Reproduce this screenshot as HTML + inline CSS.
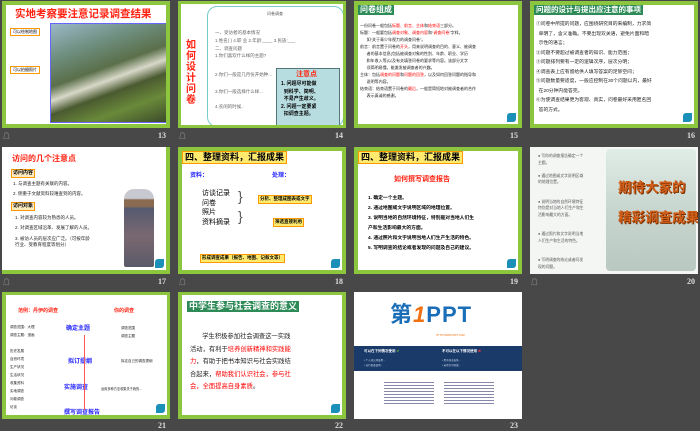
<!DOCTYPE html>
<html><head><meta charset="utf-8"><style>
*{margin:0;padding:0;box-sizing:border-box}
body{width:700px;height:431px;background:#484848;position:relative;overflow:hidden;font-family:"Liberation Sans","Noto Sans CJK SC",sans-serif}
.s{position:absolute;width:168px;height:127px;background:#fff;overflow:hidden}
.g{border:4px solid #8cc63f}
.n{position:absolute;color:#ddd;font-size:8px;font-weight:bold;font-family:"Liberation Serif",serif}
.ic{position:absolute;color:#bbb;font-size:7px}
.a{position:absolute;white-space:nowrap;line-height:1}
.t{font-size:4.5px;color:#222}
.logo{position:absolute;right:2px;bottom:2px;width:9px;height:9px;background:#1a8fb8;border-radius:3px 0 3px 0}
</style></head><body>

<!-- 13 -->
<div class="s g" style="left:2px;top:1px">
 <div class="a" style="left:9px;top:4px;color:#f21;font-size:10.5px;font-weight:bold">实地考察要注意记录调查结果</div>
 <div class="a" style="left:4px;top:23px;border:1px solid #f90;font-size:4px;padding:1px 2px">可以绘制地图</div>
 <div class="a" style="left:4px;top:61px;border:1px solid #f90;font-size:4px;padding:1px 2px">可以拍摄照片</div>
 <div style="position:absolute;left:44px;top:18px;width:118px;height:100px;border:1px solid #66f;background:linear-gradient(160deg,#9bb8c8 0%,#6f8f80 25%,#5a6f4a 45%,#d8d8c8 55%,#4a5a30 65%,#6a8a3a 80%,#3c4a2a 100%)"></div>
</div>
<div class="ic" style="left:3px;top:131px">☖</div><div class="n" style="left:158px;top:131px">13</div>

<!-- 14 -->
<div class="s g" style="left:178px;top:1px;border-width:3px">
 <div style="position:absolute;left:26px;top:2px;width:137px;height:121px;border:1px solid #7cc;border-radius:10px"></div>
 <div class="a" style="left:86px;top:8px;font-size:4px;color:#555">问卷调查</div>
 <div class="a t" style="left:34px;top:27px;color:#666">一、受访者的基本情况</div>
 <div class="a t" style="left:34px;top:35px;color:#666">1.姓名(  )  4.职 业  2.年龄:____  3.民族:___</div>
 <div class="a t" style="left:34px;top:43px;color:#666">二、调查问题</div>
 <div class="a t" style="left:34px;top:50px;color:#666">1.你们喜欢什么样的主题?</div>
 <div class="a t" style="left:34px;top:69px;color:#666">2.你们一般是几月份开始种...</div>
 <div class="a t" style="left:34px;top:86px;color:#666">3.你们一般选择什么样...</div>
 <div class="a t" style="left:34px;top:101px;color:#666">4.农闲的时候..</div>
 <div class="a" style="left:5px;top:36px;color:#f21;font-size:10px;font-weight:bold;white-space:normal;width:11px;line-height:11px">如何设计问卷</div>
 <div style="position:absolute;left:95px;top:64px;width:64px;height:60px;background:#b8dde0;border:1px solid #577"></div>
 <div class="a" style="left:115px;top:67px;color:#f21;font-size:7px;font-weight:bold">注意点</div>
 <div class="a" style="left:100px;top:77px;font-size:5px;font-weight:bold;line-height:7.5px">1. 问题尽可能做<br>&nbsp;&nbsp;到科学、简明、<br>&nbsp;&nbsp;不易产生歧义。<br>2. 问题一定要紧<br>&nbsp;&nbsp;扣调查主题。</div>
</div>
<div class="ic" style="left:179px;top:131px">☖</div><div class="n" style="left:335px;top:131px">14</div>

<!-- 15 -->
<div class="s g" style="left:354px;top:1px">
 <div class="a" style="left:0;top:0;background:#2e8b57;color:#fff;font-size:8px;font-weight:bold;padding:1px 2px">问卷组成</div>
 <div class="a t" style="left:2px;top:17px;line-height:7px;font-size:4px">一份问卷一般包括<span style="color:red">标题、前言、主体</span>和<span style="color:red">结束语</span>三部分。<br>标题：一般要包括<span style="color:red">调查对象、调查内容</span>和“<span style="color:red">调查问卷</span>”字样。<br>&nbsp;&nbsp;&nbsp;&nbsp;&nbsp;&nbsp;如“关于青少年视力的调查问卷”。<br>前言：前言置于问卷的<span style="color:red">开头</span>，用来说明调查的目的、意义、被调查<br>&nbsp;&nbsp;&nbsp;&nbsp;&nbsp;&nbsp;者的基本信息(包括被调查对象的性别、年龄、职业、学历<br>&nbsp;&nbsp;&nbsp;&nbsp;&nbsp;&nbsp;和年收入等)以及有关填答问卷的要求等内容。该部分文字<br>&nbsp;&nbsp;&nbsp;&nbsp;&nbsp;&nbsp;须简明易懂，能激发被调查者的兴趣。<br>主体：包括<span style="color:red">调查的问题</span>和<span style="color:red">问题的回答</span>，以及如何回答问题的指导和<br>&nbsp;&nbsp;&nbsp;&nbsp;&nbsp;&nbsp;说明等内容。<br>结束语：结束语置于问卷的<span style="color:red">最后</span>，一般是简短地对被调查者的合作<br>&nbsp;&nbsp;&nbsp;&nbsp;&nbsp;&nbsp;表示真诚的感谢。</div>
 <div class="logo"></div>
</div>
<div class="n" style="left:510px;top:131px">15</div>

<!-- 16 -->
<div class="s g" style="left:530px;top:1px">
 <div class="a" style="left:0;top:0;background:#2e8b57;color:#fff;font-size:7.5px;font-weight:bold;padding:1px 2px">问题的设计与提出应注意的事项</div>
 <div class="a" style="left:2px;top:15px;font-size:4.8px;line-height:9.5px;color:#222">①问卷中所提的问题，应围绕研究目的来编制，力求简<br>&nbsp;&nbsp;单明了，含义准确。不要出现双关语，避免片面和暗<br>&nbsp;&nbsp;示性的语言；<br>②问题不要超过被调查者的知识、能力范围；<br>③问题排列要有一定的逻辑次序，层次分明；<br>④调查表上应有留给供人填写答案的足够空间；<br>⑤问题数量要适度，一般应控制在30个问题以内，最好<br>&nbsp;&nbsp;在20分钟内能答完。<br>⑥为使调查结果更为客观、真实，问卷最好采用匿名回<br>&nbsp;&nbsp;答的方式。</div>
 <div class="logo"></div>
</div>
<div class="n" style="left:687px;top:131px">16</div>

<!-- 17 -->
<div class="s g" style="left:2px;top:147px;border-top:none;border-left:none">
 <div class="a" style="left:10px;top:8px;color:#f21;font-size:8px;font-weight:bold">访问的几个注意点</div>
 <div class="a" style="left:9px;top:22px;background:#fdebc0;border:1px solid #f90;font-size:5px;font-weight:bold;padding:1px">访问内容</div>
 <div class="a t" style="left:11px;top:35px">1. 与调查主题有关联的内容。</div>
 <div class="a t" style="left:11px;top:45px">2. 侧重于文献资料较难查到的内容。</div>
 <div class="a" style="left:9px;top:55px;background:#fdebc0;border:1px solid #f90;font-size:5px;font-weight:bold;padding:1px">访问对象</div>
 <div class="a t" style="left:13px;top:69px">1. 对调查内容较为熟悉的人员。</div>
 <div class="a t" style="left:13px;top:79px">2. 对调查区域沿革、发展了解的人员。</div>
 <div class="a t" style="left:13px;top:89px;line-height:6px">3. 被访人员的层次应广泛。（可按年龄<br>行业、受教育程度等划分）</div>
 <div style="position:absolute;left:122px;top:42px;width:30px;height:78px;background:linear-gradient(#c8c8d0 0%,#c8c8d0 12%,#8a6a50 14%,#8a6a50 22%,#555a70 25%,#7a6870 60%,#5a5a6a 100%);border-radius:10px 10px 2px 2px"></div>
 <div class="logo"></div>
</div>
<div class="ic" style="left:3px;top:277px">☖</div><div class="n" style="left:158px;top:277px">17</div>

<!-- 18 -->
<div class="s g" style="left:178px;top:147px">
 <div class="a" style="left:0;top:0;background:#ffea70;border:1px solid #f90;font-size:9px;font-weight:bold;padding:1px 2px">四、整理资料，汇报成果</div>
 <div class="a" style="left:8px;top:22px;color:#22f;font-size:6px;font-weight:bold">资料：</div>
 <div class="a" style="left:90px;top:22px;color:#22f;font-size:6px;font-weight:bold">处理：</div>
 <div class="a" style="left:20px;top:38px;font-size:7px;line-height:9.5px">访谈记录<br>问卷<br>照片<br>资料摘录</div>
 <div class="a" style="left:56px;top:38px;font-size:14px;color:#555">}</div>
 <div class="a" style="left:56px;top:58px;font-size:14px;color:#555">}</div>
 <div class="a" style="left:76px;top:44px;background:#ffea70;border:1px solid #f90;font-size:4.5px;font-weight:bold;padding:1px">分析、整理成图表或文字</div>
 <div class="a" style="left:91px;top:67px;background:#ffea70;border:1px solid #f90;font-size:4.5px;font-weight:bold;padding:1px">筛选直接利用</div>
 <div class="a" style="left:18px;top:103px;background:#ffea70;border:1px solid #f90;font-size:4.5px;font-weight:bold;padding:1px">形成调查成果（报告、地图、记叙文等）</div>
 <div class="logo"></div>
</div>
<div class="ic" style="left:179px;top:277px">☖</div><div class="n" style="left:335px;top:277px">18</div>

<!-- 19 -->
<div class="s g" style="left:354px;top:147px">
 <div class="a" style="left:0;top:0;background:#ffea70;border:1px solid #f90;font-size:9px;font-weight:bold;padding:1px 2px">四、整理资料，汇报成果</div>
 <div class="a" style="left:36px;top:25px;color:#f21;font-size:7px;font-weight:bold">如何撰写调查报告</div>
 <div class="a" style="left:10px;top:43px;font-size:4.8px;font-weight:bold;line-height:10px">1. 确定一个主题。<br>2. 通过地图或文字说明区域的地理位置。<br>3. 说明当地的自然环境特征，特别是对当地人们生<br>产和生活影响最大的方面。<br>4. 通过照片和文字说明当地人们生产生活的特色。<br>5. 写明调查的结论或者发现的问题及自己的建议。</div>
 <div class="logo"></div>
</div>
<div class="n" style="left:510px;top:277px">19</div>

<!-- 20 -->
<div class="s" style="left:530px;top:147px;background:#f4f6f4">
 <div style="position:absolute;left:76px;top:2px;width:90px;height:122px;background:linear-gradient(#e0ece6,#c8d6d0 50%,#b9c8c0);border-radius:4px"></div>
 <div class="a" style="left:8px;top:6px;font-size:3.8px;color:#555;line-height:6.5px">● 写你的调查报告确定一个<br>主题。<br><br>● 通过地图或文字说明区域<br>的地理位置。<br><br><br>● 说明当地的自然环境特征<br>特别是对当地人们生产和生<br>活影响最大的方面。<br><br><br>● 通过照片和文字说明当地<br>人们生产和生活的特色。<br><br><br>● 写明调查的结论或者问发<br>现的问题。</div>
 <div class="a" style="left:88px;top:26px;color:#d2601a;font-size:13.5px;font-weight:bold;line-height:30px;text-shadow:1px 1px 0 #7a3000">期待大家的<br>精彩调查成果</div>
</div>
<div class="ic" style="left:531px;top:277px">☖</div><div class="n" style="left:687px;top:277px">20</div>

<!-- 21 -->
<div class="s g" style="left:2px;top:292px;border-top-width:3px;border-right-width:3px">
 <div class="a" style="left:12px;top:14px;color:#f21;font-size:5px;font-weight:bold">范例：丹伊的调查</div>
 <div class="a" style="left:108px;top:14px;color:#f21;font-size:5px;font-weight:bold">你的调查</div>
 <div class="a" style="left:60px;top:31px;color:#22f;font-size:6px;font-weight:bold">确定主题</div>
 <div class="a" style="left:62px;top:64px;color:#22f;font-size:6px;font-weight:bold">拟订提纲</div>
 <div class="a" style="left:58px;top:90px;color:#22f;font-size:6px;font-weight:bold">实施调查</div>
 <div class="a" style="left:58px;top:115px;color:#22f;font-size:6px;font-weight:bold">撰写调查报告</div>
 <div style="position:absolute;left:78px;top:40px;width:1px;height:75px;background:#f55"></div>
 <div class="a t" style="left:4px;top:28px;line-height:8px;font-size:3.5px">调查范围：大理<br>调查主题：漫画<br><br>历史发展<br>自然环境<br>生产状况<br>生活状况<br>收集资料<br>实地调查<br>问卷调查<br>访谈</div>
 <div class="a t" style="left:115px;top:29px;font-size:3.5px;line-height:8px">调查范围<br>调查主题</div>
 <div class="a t" style="left:115px;top:65px;font-size:3.5px">拟定自己的调查提纲</div>
 <div class="a t" style="left:95px;top:93px;font-size:3.2px">运用多种方法收集关于我的...</div>
 <div class="logo"></div>
</div>
<div class="n" style="left:158px;top:421px">21</div>

<!-- 22 -->
<div class="s g" style="left:178px;top:292px;border-top-width:3px">
 <div class="a" style="left:5px;top:6px;background:#2e8b57;color:#fff;font-size:9px;font-weight:bold;padding:1px 2px">中学生参与社会调查的意义</div>
 <div class="a" style="left:8px;top:36px;font-size:6.3px;line-height:12.5px;color:#222">&nbsp;&nbsp;&nbsp;&nbsp;&nbsp;&nbsp;&nbsp;学生积极参加社会调查这一实践<br>活动，有利于<span style="color:red">培养创新精神和实践能</span><br><span style="color:red">力</span>，有助于把书本知识与社会实践结<br>合起来，<span style="color:red">帮助我们认识社会，参与社</span><br><span style="color:red">会，全面提高自身素质</span>。</div>
 <div class="logo"></div>
</div>
<div class="n" style="left:335px;top:421px">22</div>

<!-- 23 -->
<div class="s" style="left:354px;top:292px">
 <div class="a" style="left:36px;top:12px;font-size:22px;font-weight:bold;color:#1a6eb8;letter-spacing:1px">第<span style="color:#f07010;font-style:italic">1</span>PPT</div>
 <div class="a" style="left:82px;top:43px;font-size:2.5px;color:#f07010">HTTP://WWW.1PPT.COM</div>
 <div style="position:absolute;left:0;top:54px;width:168px;height:25px;background:#1a3a6a"></div>
 <div class="a" style="left:10px;top:58px;color:#fff;font-size:3.5px;font-weight:bold">可以在下列情况使用 <span style="color:#6c3">✔</span></div>
 <div class="a" style="left:88px;top:58px;color:#fff;font-size:3.5px;font-weight:bold">不可以在以下情况使用 <span style="color:#e33">✖</span></div>
 <div class="a" style="left:10px;top:66px;color:#cde;font-size:2.5px;line-height:5px">• 个人或公司使用...<br>• 自行修改使用...</div>
 <div class="a" style="left:88px;top:66px;color:#cde;font-size:2.5px;line-height:5px">• 用于商业出售...<br>• 未经许可转载...</div>
 <div style="position:absolute;left:30px;top:88px;width:50px;height:25px;background:repeating-linear-gradient(#fff 0 2px,#88a 2px 3px)"></div>
 <div style="position:absolute;left:90px;top:88px;width:50px;height:25px;background:repeating-linear-gradient(#fff 0 2px,#88a 2px 3px)"></div>
</div>
<div class="n" style="left:510px;top:421px">23</div>

</body></html>
